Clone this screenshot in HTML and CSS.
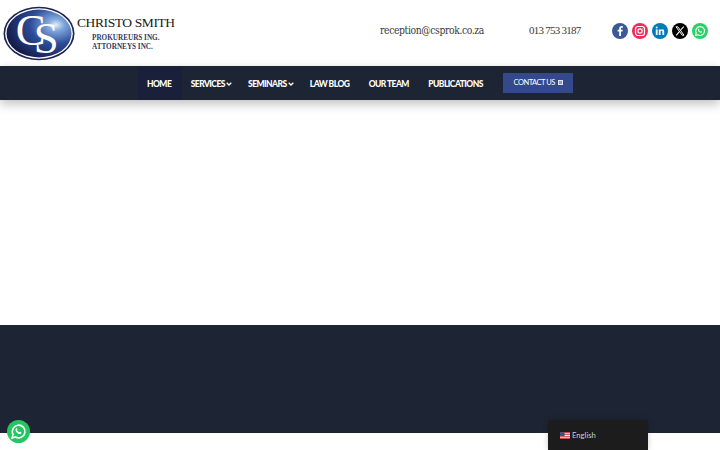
FILE: index.html
```html
<!DOCTYPE html>
<html lang="en">
<head>
<meta charset="utf-8">
<title>Christo Smith Attorneys</title>
<link rel="stylesheet" href="styles.css">
</head>
<body>
<header class="top">
  <div class="brand">
    <svg class="logo" viewBox="0 0 74 56" width="72" height="55">
      <defs>
        <radialGradient id="g" cx="0.76" cy="0.32" r="0.8">
          <stop offset="0" stop-color="#e3ecf8"/>
          <stop offset="0.16" stop-color="#7fa6dc"/>
          <stop offset="0.5" stop-color="#2c4c98"/>
          <stop offset="1" stop-color="#141a48"/>
        </radialGradient>
      </defs>
      <ellipse cx="37" cy="28" rx="36.500" ry="27.500" fill="#1c2450"/>
      <ellipse cx="37" cy="28" rx="34.800" ry="25.900" fill="#fff"/>
      <ellipse cx="37" cy="28" rx="33.400" ry="24.600" fill="url(#g)"/>
      <text class="logo-cs" x="13" y="40">C<tspan dx="-12" dy="8">S</tspan></text>
    </svg>
    <div class="brand-text">
      <div class="brand-name">CHRISTO SMITH</div>
      <div class="brand-sub">PROKUREURS ING.<br>ATTORNEYS INC.</div>
    </div>
  </div>
  <div class="contact">
    <span class="email">reception@csprok.co.za</span>
    <span class="phone">013 753 3187</span>
    <div class="social">
      <span class="soc fb"><svg viewBox="0 0 16 16"><path fill="#fff" d="M9 13V8.600h1.500l.3-1.800H9V5.700c0-.5.2-.9.9-.9h1V3.200c-.3 0-.8-.1-1.300-.1-1.500 0-2.400.9-2.400 2.400v1.300H5.600v1.800h1.600V13z"/></svg></span>
      <span class="soc ig"><svg viewBox="0 0 16 16" fill="none" stroke="#fff" stroke-width="1.200"><rect x="3.500" y="3.500" width="9" height="9" rx="2.500"/><circle cx="8" cy="8" r="2.100"/><circle cx="10.700" cy="5.300" r=".4" fill="#fff" stroke="none"/></svg></span>
      <span class="soc li"><svg viewBox="0 0 16 16"><path fill="#fff" d="M3.800 6.400h1.800V12H3.800zM4.700 3.600a1 1 0 1 1 0 2 1 1 0 0 1 0-2zM6.800 6.400h1.700v.8c.3-.5.9-.9 1.700-.9 1.500 0 2 1 2 2.400V12h-1.800V9c0-.7-.2-1.200-.8-1.200-.7 0-1 .5-1 1.200v3H6.800z"/></svg></span>
      <span class="soc xx"><svg viewBox="0 0 16 16" fill="none" stroke="#fff"><path stroke-width="1" d="M4 3.800h1.800l6.200 8.400h-1.800z"/><path stroke-width="1.100" d="M11.700 3.600 8.700 7M7.200 8.900l-3 3.500"/></svg></span>
      <span class="soc wa"><svg viewBox="0 0 16 16"><path fill="none" stroke="#fff" stroke-width="1.100" d="M3.500 12.500l.7-2.500a4.400 4.400 0 1 1 1.700 1.800z"/><path fill="#fff" d="M6.500 5.800c.4-.3.600 0 .8.600.1.300-.3.500-.3.700.3.700.8 1.200 1.500 1.500.3 0 .4-.5.700-.4.600.2.900.4.800.8-.3.800-1.100.9-1.900.6C7 9.100 6.300 8.300 6 7.400c-.2-.6 0-1.200.5-1.600z"/></svg></span>
    </div>
  </div>
</header>
<nav class="nav">
  <a class="item active">HOME</a>
  <a class="item has-sub">SERVICES<svg class="chev" viewBox="0 0 6 4"><path d="M.7.700 3 3 5.300.700" fill="none" stroke="#fff" stroke-width="1.300"/></svg></a>
  <a class="item has-sub">SEMINARS<svg class="chev" viewBox="0 0 6 4"><path d="M.7.700 3 3 5.300.700" fill="none" stroke="#fff" stroke-width="1.300"/></svg></a>
  <a class="item">LAW BLOG</a>
  <a class="item">OUR TEAM</a>
  <a class="item">PUBLICATIONS</a>
  <a class="cta">CONTACT US <span class="cta-icon"></span></a>
</nav>
<main class="hero"></main>
<section class="band"></section>
<div class="tail"></div>
<span class="wa-float"><svg viewBox="0 0 16 16"><path fill="none" stroke="#fff" stroke-width="1.100" d="M3.500 12.500l.7-2.500a4.400 4.400 0 1 1 1.700 1.800z"/><path fill="#fff" d="M6.500 5.800c.4-.3.600 0 .8.600.1.300-.3.500-.3.700.3.700.8 1.200 1.500 1.500.3 0 .4-.5.700-.4.600.2.900.4.800.8-.3.800-1.100.9-1.900.6C7 9.100 6.300 8.300 6 7.400c-.2-.6 0-1.200.5-1.600z"/></svg></span>
<div class="lang">
  <svg class="flag" viewBox="0 0 11 7" width="10" height="7"><rect width="11" height="7" fill="#f2e6e6"/><path d="M0 0h11v1H0zM0 2h11v1H0zM0 4h11v1H0zM0 6h11v1H0z" fill="#c8323c"/><rect width="5" height="4" fill="#3c4a86"/></svg>
  <span>English</span>
</div>
</body>
</html>
```
FILE: styles.css
```css
* { box-sizing: border-box; }
html, body { margin: 0; padding: 0; }
body { width: 720px; height: 450px; overflow: hidden; background: #fff; position: relative; font-family: "Liberation Serif", serif; }
.top { height: 66px; display: flex; align-items: center; justify-content: space-between; padding: 0 12px 4px 3px; }
.brand { display: flex; align-items: flex-start; align-self: flex-start; gap: 2px; }
.logo { display: block; margin-top: 6px; flex: none; overflow: visible; }
.logo-cs { font: 400 46px "Liberation Serif", serif; fill: #fff; }
.brand-text { padding-top: 16px; }
.brand-name { font: 400 13.500px/14px "Liberation Serif", serif; color: #1a1a1a; letter-spacing: -.4px; }
.brand-sub { font: 700 7.200px/9px "Liberation Serif", serif; color: #2f3a66; margin: 4px 0 0 15px; }
.contact { display: flex; align-items: center; }
.email { font: 400 10.300px/14px "DejaVu Serif Condensed", "DejaVu Serif", serif; color: #3a3a3a; letter-spacing: -.38px; width: 149px; margin-bottom: 2px; }
.phone { font: 400 11px/14px "Liberation Serif", serif; color: #3a3a3a; letter-spacing: -.75px; width: 83px; margin-bottom: 2px; }
.social { display: flex; gap: 4px; }
.soc { width: 16px; height: 16px; border-radius: 50%; display: block; }
.soc svg { display: block; width: 16px; height: 16px; }
.fb { background: #3b5998; }
.ig { background: #ea2c59; }
.li { background: #007bb6; }
.xx { background: #000; }
.wa { background: #25d366; }
.nav { height: 34px; background: #1d2433; display: flex; align-items: stretch; padding-left: 138px; position: relative; box-shadow: 0 4px 10px rgba(0,0,0,.25); }
.item { font: 900 8.500px/34px "Lato", sans-serif; letter-spacing: -.55px; color: #fff; padding: 1px 9.700px 0; display: flex; align-items: center; }
.has-sub { padding-right: 6.500px; }
.chev { width: 6px; height: 4px; margin-left: 1px; }
.active { background: #1a1f3a; width: 44px; padding: 1px 9px 0; margin-right: -1px; }
.cta { font: 400 7.500px/20px "Lato", sans-serif; letter-spacing: -.5px; color: #fff; background: #34488c; width: 70px; height: 20px; align-self: center; margin: -1px 0 0 10px; padding-left: 11px; display: flex; align-items: center; gap: 3px; }
.cta-icon { width: 5px; height: 5px; border: 1.500px solid #dfe3f2; background: #8e9ac6; display: block; }
.hero { height: 225px; background: #fff; }
.band { height: 108px; background: #1d2433; }
.tail { height: 17px; background: #fff; }
.wa-float { position: absolute; left: 7px; top: 420px; width: 23px; height: 23px; border-radius: 50%; background: #25c660; }
.wa-float svg { display: block; width: 23px; height: 23px; }
.lang { position: absolute; left: 548px; top: 420px; width: 100px; height: 30px; background: #1c1c1c; display: flex; align-items: center; gap: 2px; padding: 0 0 0 12px; font: 400 7.700px/10px "Lato", sans-serif; color: #ccc; box-shadow: 0 0 6px rgba(0,0,0,.2); }
.flag { display: block; }
```
